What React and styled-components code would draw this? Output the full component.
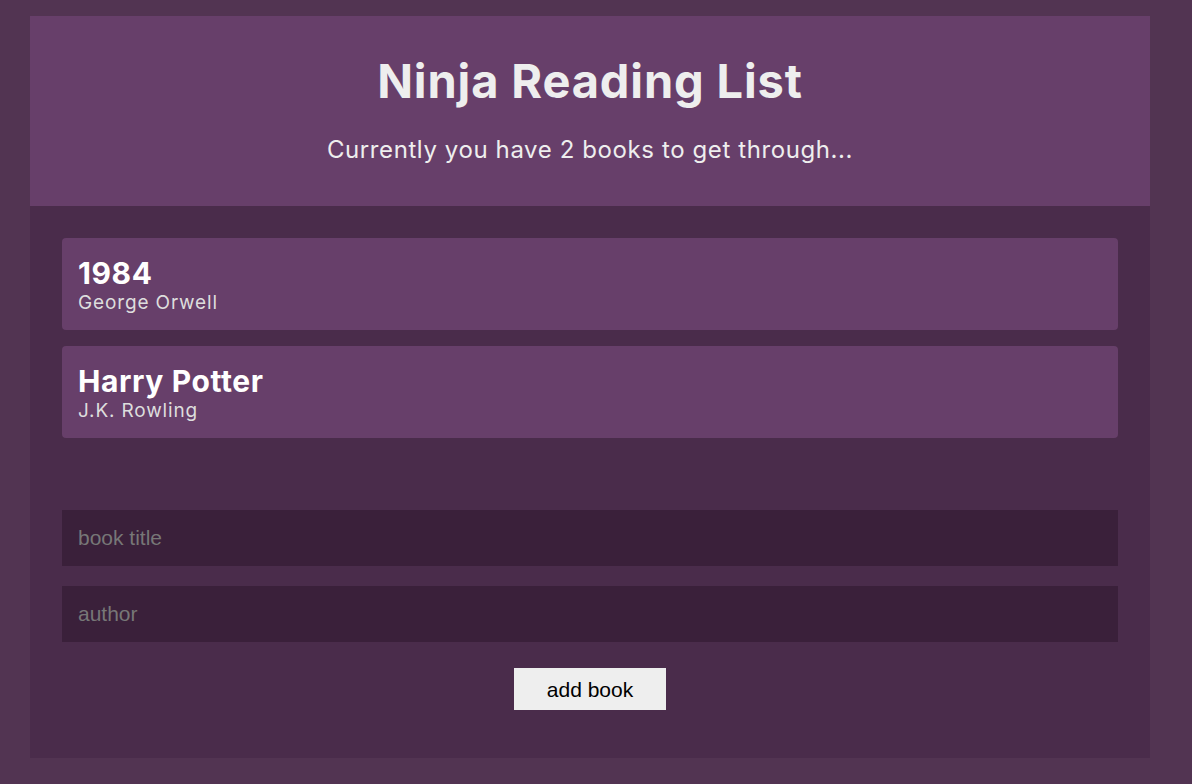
import React, { useState } from 'react'
import styled, { createGlobalStyle } from 'styled-components'

const GlobalStyle = createGlobalStyle`
  body {
    margin: 0;
    background: #523452;
    font-family: Inter, "Noto Sans", sans-serif;
  }
`

const Page = styled.div`
  margin: 16px 42px 26px 30px;
  background: #4a2c4b;
`

const Navbar = styled.header`
  background: #673f6a;
  height: 190px;
  box-sizing: border-box;
  padding-top: 37px;
  text-align: center;
  color: #eee;
  h1 {
    margin: 0;
    font-size: 47px;
    font-weight: 700;
    line-height: 56px;
    letter-spacing: 0.85px;
  }
  p {
    margin: 27px 0 0;
    font-size: 24px;
    line-height: 28px;
    letter-spacing: 0.6px;
  }
`

const Main = styled.main`
  padding: 32px 32px 48px;
`

const BookList = styled.ul`
  list-style: none;
  margin: 0 0 72px;
  padding: 0;
  display: flex;
  flex-direction: column;
  gap: 16px;
`

const Book = styled.li`
  background: #673f6a;
  border-radius: 4px;
  padding: 18px 16px 0;
  height: 92px;
  box-sizing: border-box;
  color: #fff;
`

const Title = styled.div`
  font-size: 30px;
  font-weight: 700;
  line-height: 34px;
  letter-spacing: 0.6px;
`

const Author = styled.div`
  margin-top: 1px;
  font-size: 19px;
  line-height: 24px;
  letter-spacing: 0.85px;
  color: #ddd;
`

const Form = styled.form`
  display: flex;
  flex-direction: column;
  gap: 20px;
`

const Input = styled.input`
  display: block;
  height: 56px;
  box-sizing: border-box;
  border: 0;
  outline: none;
  background: #3a203a;
  padding: 0 16px;
  font-family: "Liberation Sans", Arial, sans-serif;
  font-size: 21px;
  color: #eee;
  &::placeholder {
    color: #777;
  }
`

const Button = styled.button`
  display: block;
  margin: 6px auto 0;
  width: 152px;
  height: 42px;
  border: 0;
  background: #eee;
  color: #000;
  font-family: "Liberation Sans", Arial, sans-serif;
  font-size: 21px;
  padding: 2px 0 0;
`

const books = [
  { id: 1, title: '1984', author: 'George Orwell' },
  { id: 2, title: 'Harry Potter', author: 'J.K. Rowling' },
]

export default function App() {
  const [title, setTitle] = useState('')
  const [author, setAuthor] = useState('')
  return (
    <>
      <GlobalStyle />
      <Page>
        <Navbar>
          <h1>Ninja Reading List</h1>
          <p>Currently you have {books.length} books to get through...</p>
        </Navbar>
        <Main>
          <BookList>
            {books.map(b => (
              <Book key={b.id}>
                <Title>{b.title}</Title>
                <Author>{b.author}</Author>
              </Book>
            ))}
          </BookList>
          <Form onSubmit={e => e.preventDefault()}>
            <Input placeholder="book title" value={title} onChange={e => setTitle(e.target.value)} />
            <Input placeholder="author" value={author} onChange={e => setAuthor(e.target.value)} />
            <Button type="submit">add book</Button>
          </Form>
        </Main>
      </Page>
    </>
  )
}
